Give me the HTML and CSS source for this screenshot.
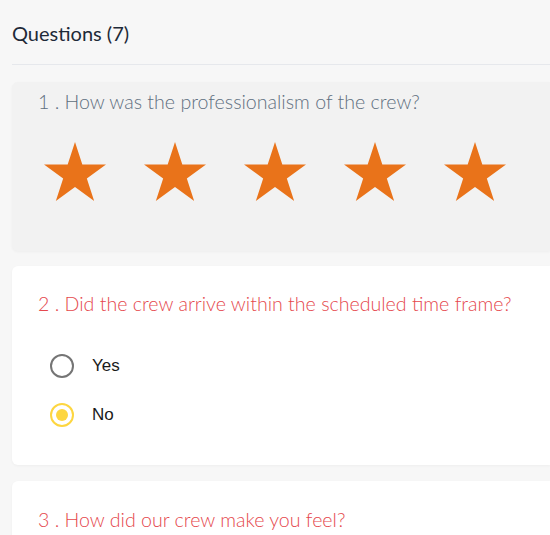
FILE: index.html
```html
<!DOCTYPE html>
<html>
<head>
<meta charset="utf-8">
<link rel="stylesheet" href="styles.css">
</head>
<body>
<div class="page">
  <h1 class="title">Questions (7)</h1>
  <div class="divider"></div>
  <div class="card card-grey">
    <p class="q q-grey">1 . How was the professionalism of the crew?</p>
    <div class="stars">
      <svg class="star" viewBox="0 0 62 59"><polygon points="31,0 38.32,22.53 62,22.53 42.84,36.45 50.16,58.97 31,45.05 11.84,58.97 19.16,36.45 0,22.53 23.68,22.53"/></svg>
      <svg class="star" viewBox="0 0 62 59"><polygon points="31,0 38.32,22.53 62,22.53 42.84,36.45 50.16,58.97 31,45.05 11.84,58.97 19.16,36.45 0,22.53 23.68,22.53"/></svg>
      <svg class="star" viewBox="0 0 62 59"><polygon points="31,0 38.32,22.53 62,22.53 42.84,36.45 50.16,58.97 31,45.05 11.84,58.97 19.16,36.45 0,22.53 23.68,22.53"/></svg>
      <svg class="star" viewBox="0 0 62 59"><polygon points="31,0 38.32,22.53 62,22.53 42.84,36.45 50.16,58.97 31,45.05 11.84,58.97 19.16,36.45 0,22.53 23.68,22.53"/></svg>
      <svg class="star" viewBox="0 0 62 59"><polygon points="31,0 38.32,22.53 62,22.53 42.84,36.45 50.16,58.97 31,45.05 11.84,58.97 19.16,36.45 0,22.53 23.68,22.53"/></svg>
    </div>
  </div>
  <div class="card card-white card-2">
    <p class="q q-red">2 . Did the crew arrive within the scheduled time frame?</p>
    <div class="options">
      <label class="option"><span class="radio"></span><span class="opt-label">Yes</span></label>
      <label class="option"><span class="radio radio-on"><span class="dot"></span></span><span class="opt-label">No</span></label>
    </div>
  </div>
  <div class="card card-white card-3">
    <p class="q q-red">3 . How did our crew make you feel?</p>
  </div>
</div>
</body>
</html>
```
FILE: styles.css
```css
html, body {
  margin: 0;
  padding: 0;
  background: #f7f7f7;
  overflow: hidden;
}
.page {
  padding-left: 12px;
  font-family: Lato, "Noto Sans", sans-serif;
}
.title {
  margin: 0;
  padding-top: 21px;
  height: 64px;
  box-sizing: border-box;
  font-size: 20px;
  font-weight: 400;
  line-height: 24px;
  color: #1e2a38;
}
.divider {
  height: 1px;
  background: #e6e8ec;
}
.card {
  border-radius: 6px 0 0 6px;
  box-shadow: 0 1px 3px rgba(0,0,0,0.04);
}
.card-grey {
  margin-top: 17px;
  background: #f2f2f2;
  padding: 8px 0 0 26px;
  height: 169px;
  box-sizing: border-box;
}
.card-white {
  background: #ffffff;
}
.card-2 {
  margin-top: 15px;
  padding: 26px 0 0 26px;
  height: 199px;
  box-sizing: border-box;
}
.card-3 {
  margin-top: 16px;
  padding: 27px 0 0 26px;
  height: 80px;
  box-sizing: border-box;
}
.q {
  margin: 0;
  font-size: 19.6px;
  line-height: 24px;
  font-weight: 300;
}
.q-grey {
  color: #5f6f80;
}
.q-red {
  color: #e5484d;
}
.stars {
  display: flex;
  gap: 38px;
  margin-top: 28px;
  margin-left: 6px;
}
.star {
  width: 62px;
  height: 59px;
  display: block;
  fill: #e9731a;
}
.options {
  display: flex;
  flex-direction: column;
  gap: 25px;
  margin-top: 38px;
  margin-left: 12px;
}
.option {
  display: flex;
  align-items: center;
  height: 24px;
}
.radio {
  width: 24px;
  height: 24px;
  box-sizing: border-box;
  border: 2px solid #757575;
  border-radius: 50%;
  display: flex;
  align-items: center;
  justify-content: center;
}
.radio-on {
  border-color: #fdd640;
}
.dot {
  width: 12px;
  height: 12px;
  border-radius: 50%;
  background: #fdd640;
}
.opt-label {
  margin-left: 18px;
  font-family: "Liberation Sans", Arial, sans-serif;
  font-size: 17px;
  color: #1a1a1a;
}
```
